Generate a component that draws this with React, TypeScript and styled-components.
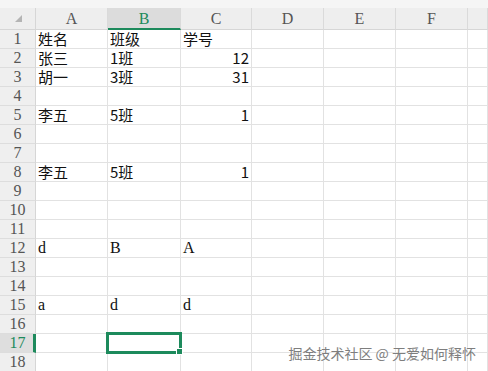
import React from 'react'
import styled, { createGlobalStyle, css } from 'styled-components'

const GlobalStyle = createGlobalStyle`
  html, body {
    margin: 0;
    padding: 0;
    background: #ffffff;
    overflow: hidden;
  }
`

const GREEN = '#1d8a5c'
const CJK = `"Noto Sans CJK SC", "Noto Sans", sans-serif`
const LATIN = `"Liberation Serif", "DejaVu Serif", serif`

const Sheet = styled.div`
  position: relative;
  width: 488px;
  height: 371px;
  overflow: hidden;
  background: #ffffff;
`

const TopStrip = styled.div`
  height: 8px;
  background: #f5f5f5;
`

const Grid = styled.div`
  display: grid;
  grid-template-columns: 36px 72px 73px 71px 72px 72px 72px 1fr;
  grid-template-rows: 22px;
  grid-auto-rows: 19px;
`

const Corner = styled.div`
  position: relative;
  background: #eeeeee;
  border-right: 1px solid #d6d6d6;
  border-bottom: 1px solid #d6d6d6;
  box-sizing: border-box;

  &::after {
    content: '';
    position: absolute;
    left: 15px;
    top: 7px;
    width: 0;
    height: 0;
    border-left: 7px solid transparent;
    border-bottom: 7px solid #b4b4b4;
  }
`

const ColHeader = styled.div<{ $active?: boolean }>`
  display: flex;
  align-items: center;
  justify-content: center;
  box-sizing: border-box;
  background: ${p => (p.$active ? '#dcdcdc' : '#eeeeee')};
  border-right: 1px solid #dadada;
  border-bottom: ${p => (p.$active ? `2px solid ${GREEN}` : '1px solid #d6d6d6')};
  padding-top: ${p => (p.$active ? '1px' : '0')};
  font-family: ${LATIN};
  font-size: 16px;
  color: ${p => (p.$active ? GREEN : '#555555')};
`

const RowHeader = styled.div<{ $active?: boolean }>`
  display: flex;
  align-items: center;
  justify-content: center;
  box-sizing: border-box;
  background: ${p => (p.$active ? '#dedede' : '#efefef')};
  border-bottom: 1px solid #dddddd;
  border-right: ${p => (p.$active ? `3px solid ${GREEN}` : '1px solid #d6d6d6')};
  padding-left: ${p => (p.$active ? '2px' : '0')};
  font-family: ${LATIN};
  font-size: 16px;
  color: ${p => (p.$active ? GREEN : '#555555')};
`

const Cell = styled.div<{ $align?: 'left' | 'right'; $latin?: boolean; $selected?: boolean }>`
  position: relative;
  display: flex;
  align-items: flex-end;
  justify-content: ${p => (p.$align === 'right' ? 'flex-end' : 'flex-start')};
  box-sizing: border-box;
  padding: 0 2px 0 2px;
  border-right: 1px solid #e2e2e2;
  border-bottom: 1px solid #e2e2e2;
  font-family: ${p => (p.$latin ? LATIN : CJK)};
  font-size: ${p => (p.$latin ? '16px' : '15px')};
  line-height: 18px;
  color: #111111;
  white-space: nowrap;

  ${p =>
    p.$selected &&
    css`
      &::after {
        content: '';
        position: absolute;
        left: -2px;
        top: -2px;
        right: -2px;
        bottom: -2px;
        border: 3px solid ${GREEN};
        z-index: 2;
      }
      &::before {
        content: '';
        position: absolute;
        right: -3px;
        bottom: -3px;
        width: 5px;
        height: 5px;
        background: ${GREEN};
        border: 1px solid #ffffff;
        z-index: 3;
      }
    `}
`

const Watermark = styled.div`
  position: absolute;
  right: 12px;
  bottom: 8px;
  font-family: ${CJK};
  font-size: 14px;
  color: #7e7e7e;
  text-shadow: 0 0 2px #ffffff;
`

type CellData = { text: string; align?: 'left' | 'right'; latin?: boolean }

const columns = ['A', 'B', 'C', 'D', 'E', 'F', '']

const data: Record<number, (CellData | null)[]> = {
  1: [{ text: '姓名' }, { text: '班级' }, { text: '学号' }],
  2: [{ text: '张三' }, { text: '1班' }, { text: '12', align: 'right' }],
  3: [{ text: '胡一' }, { text: '3班' }, { text: '31', align: 'right' }],
  5: [{ text: '李五' }, { text: '5班' }, { text: '1', align: 'right' }],
  8: [{ text: '李五' }, { text: '5班' }, { text: '1', align: 'right' }],
  12: [{ text: 'd', latin: true }, { text: 'B', latin: true }, { text: 'A', latin: true }],
  15: [{ text: 'a', latin: true }, { text: 'd', latin: true }, { text: 'd', latin: true }],
}

const ACTIVE_ROW = 17
const ACTIVE_COL = 1

export default function App() {
  const rows = Array.from({ length: 18 }, (_, i) => i + 1)

  return (
    <Sheet>
      <GlobalStyle />
      <TopStrip />
      <Grid>
        <Corner />
        {columns.map((c, i) => (
          <ColHeader key={'h' + i} $active={i === ACTIVE_COL}>
            {c}
          </ColHeader>
        ))}

        {rows.map(r => (
          <React.Fragment key={r}>
            <RowHeader $active={r === ACTIVE_ROW}>{r}</RowHeader>
            {columns.map((_, ci) => {
              const d = data[r]?.[ci]
              return (
                <Cell
                  key={ci}
                  $align={d?.align}
                  $latin={d?.latin}
                  $selected={r === ACTIVE_ROW && ci === ACTIVE_COL}
                >
                  {d?.text}
                </Cell>
              )
            })}
          </React.Fragment>
        ))}
      </Grid>
      <Watermark>掘金技术社区 @ 无爱如何释怀</Watermark>
    </Sheet>
  )
}
